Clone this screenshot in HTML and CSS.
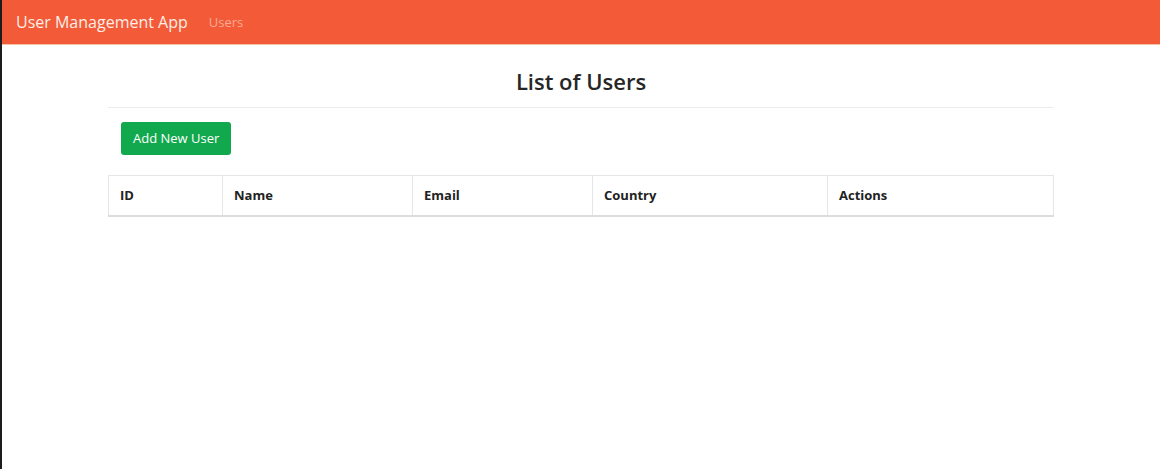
FILE: index.html
```html
<!DOCTYPE html>
<html>
<head>
<meta charset="utf-8">
<link rel="stylesheet" href="styles.css">
</head>
<body>
<div class="edge"></div>
<div class="page">
  <nav class="navbar">
    <span class="brand">User Management App</span>
    <a class="nav-link">Users</a>
  </nav>
  <div class="container">
    <h3 class="title">List of Users</h3>
    <hr class="rule">
    <div class="toolbar">
      <a class="btn-success">Add New User</a>
    </div>
    <table class="users">
      <thead>
        <tr>
          <th class="c-id">ID</th>
          <th class="c-name">Name</th>
          <th class="c-email">Email</th>
          <th class="c-country">Country</th>
          <th class="c-actions">Actions</th>
        </tr>
      </thead>
    </table>
  </div>
</div>
</body>
</html>
```

FILE: styles.css
```css
html, body {
  margin: 0;
  height: 100%;
}
body {
  display: flex;
  font-family: "Open Sans", "Noto Sans", sans-serif;
  color: #212529;
  background: #fff;
}
.edge {
  width: 2px;
  background: #1c1c1c;
  flex: none;
}
.page {
  flex: 1;
}
.navbar {
  height: 45px;
  background: #f35a38;
  display: flex;
  align-items: center;
  padding-left: 14px;
  border-bottom: 1px solid #f6c3a8;
  box-sizing: border-box;
}
.brand {
  font-size: 16px;
  color: #fdeee6;
  margin-right: 21px;
}
.nav-link {
  font-size: 13px;
  color: #f9ab93;
}
.container {
  width: 946px;
  margin: 0 auto;
}
.title {
  margin: 19px 0 0;
  text-align: center;
  font-size: 22px;
  font-weight: 600;
  line-height: 34px;
  color: #262626;
}
.rule {
  margin: 9px 0 0;
  border: 0;
  border-top: 1px solid #ececec;
}
.toolbar {
  padding: 14px 0 0 13px;
}
.btn-success {
  display: inline-block;
  background: #12a84e;
  color: #fff;
  font-size: 13px;
  line-height: 33px;
  padding: 0 12px;
  border-radius: 3px;
}
.users {
  margin-top: 20px;
  width: 100%;
  border-collapse: collapse;
  table-layout: fixed;
}
.users th {
  text-align: left;
  font-size: 13px;
  font-weight: 700;
  color: #222;
  height: 40px;
  padding: 0 11px;
  border: 1px solid #e6e6e6;
  border-bottom: 2px solid #dcdcdc;
  box-sizing: border-box;
}
.c-id { width: 114px; }
.c-name { width: 190px; }
.c-email { width: 180px; }
.c-country { width: 235px; }
```
